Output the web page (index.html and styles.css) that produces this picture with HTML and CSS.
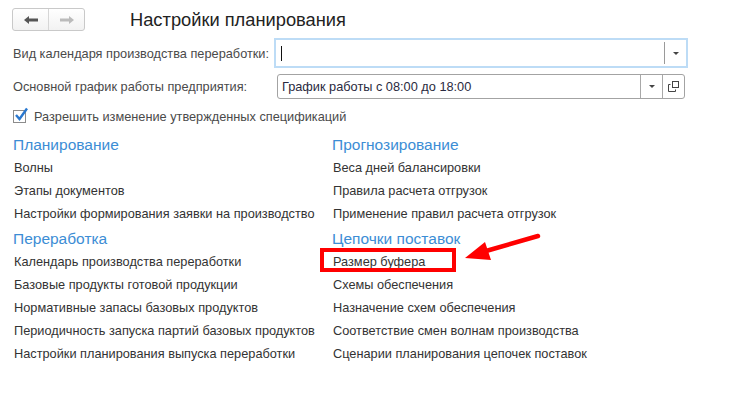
FILE: index.html
```html
<!DOCTYPE html>
<html lang="ru">
<head>
    <meta charset="UTF-8">
    <title>Настройки планирования</title>
    <link rel="stylesheet" href="styles.css">
</head>
<body>

    <div class="header">
        <div class="nav">
            <button class="nav-btn">
                <svg width="16" height="10" viewBox="0 0 16 10"><path d="M1 5 L6 1 L6 3.5 L15 3.5 L15 6.5 L6 6.5 L6 9 Z" fill="#555"/></svg>
            </button>
            <button class="nav-btn">
                <svg width="16" height="10" viewBox="0 0 16 10"><path d="M15 5 L10 1 L10 3.5 L1 3.5 L1 6.5 L10 6.5 L10 9 Z" fill="#bbb"/></svg>
            </button>
        </div>
        <h1 class="title">Настройки планирования</h1>
    </div>

    <div class="form">
        <div class="row">
            <label class="label label-wide">Вид календаря производства переработки:</label>
            <div class="field field-focus">
                <span class="caret"></span>
                <span class="field-btn field-btn-line"><span class="drop"></span></span>
            </div>
        </div>

        <div class="row">
            <label class="label label-narrow">Основной график работы предприятия:</label>
            <div class="field field-plain">
                <span class="field-text">График работы с 08:00 до 18:00</span>
                <span class="field-btn"><span class="drop"></span></span>
                <span class="field-btn">
                    <svg width="11" height="11" viewBox="0 0 11 11">
                        <rect x="4.5" y="0.5" width="6" height="6" fill="none" stroke="#444"/>
                        <path d="M2.5 3.5 H0.5 V10.5 H7.5 V8.5" fill="none" stroke="#444"/>
                    </svg>
                </span>
            </div>
        </div>

        <div class="check-row">
            <span class="checkbox">
                <svg width="16" height="16" viewBox="0 0 16 16"><path d="M3 8 L6.5 12 L14 1.5" fill="none" stroke="#2a78cf" stroke-width="2.4"/></svg>
            </span>
            <span>Разрешить изменение утвержденных спецификаций</span>
        </div>
    </div>

    <div class="groups">
        <div class="group">
            <h2 class="group-title">Планирование</h2>
            <a class="link">Волны</a>
            <a class="link">Этапы документов</a>
            <a class="link">Настройки формирования заявки на производство</a>

            <h2 class="group-title next">Переработка</h2>
            <a class="link">Календарь производства переработки</a>
            <a class="link">Базовые продукты готовой продукции</a>
            <a class="link">Нормативные запасы базовых продуктов</a>
            <a class="link">Периодичность запуска партий базовых продуктов</a>
            <a class="link">Настройки планирования выпуска переработки</a>
        </div>
        <div class="group">
            <h2 class="group-title">Прогнозирование</h2>
            <a class="link">Веса дней балансировки</a>
            <a class="link">Правила расчета отгрузок</a>
            <a class="link">Применение правил расчета отгрузок</a>

            <h2 class="group-title next">Цепочки поставок</h2>
            <a class="link marked">Размер буфера</a>
            <a class="link">Схемы обеспечения</a>
            <a class="link">Назначение схем обеспечения</a>
            <a class="link">Соответствие смен волнам производства</a>
            <a class="link">Сценарии планирования цепочек поставок</a>
        </div>
    </div>

    <!-- red annotation arrow -->
    <svg class="annot-arrow" width="742" height="402" viewBox="0 0 742 402">
        <line x1="538" y1="236" x2="486" y2="251" stroke="#f00" stroke-width="4.5" stroke-linecap="round"/>
        <polygon points="465,258 491,260 485,242" fill="#f00"/>
    </svg>

</body>
</html>
```

FILE: styles.css
```css
body {
    margin: 0;
    font-family: "Liberation Sans", Arial, sans-serif;
    font-size: 12.75px;
    color: #333;
    background: #fff;
    position: relative;
    width: 742px;
    height: 402px;
    overflow: hidden;
}

.header {
    display: flex;
    align-items: center;
    padding: 8px 0 0 12px;
    height: 23px;
}

.nav {
    display: flex;
    width: 71px;
    height: 21px;
    border: 1px solid #c9c9c9;
    border-radius: 3px;
    background: linear-gradient(#fff, #f2f2f2);
}

.nav-btn {
    flex: 1;
    border: none;
    background: none;
    padding: 0;
    display: flex;
    align-items: center;
    justify-content: center;
}

.nav-btn + .nav-btn {
    border-left: 1px solid #d6d6d6;
}

.title {
    margin: 0 0 0 45px;
    font-size: 18.3px;
    font-weight: normal;
    color: #222;
}

.form {
    padding-left: 13px;
}

.row {
    display: flex;
    align-items: center;
}

.row:first-child {
    margin-top: 7px;
    height: 30px;
}

.row + .row {
    margin-top: 6px;
    height: 25px;
}

.label {
    color: #4a4a4a;
    white-space: nowrap;
}

.label-wide {
    width: 261px;
}

.label-narrow {
    width: 264px;
}

.field {
    display: flex;
    align-items: stretch;
    box-sizing: border-box;
}

.field-focus {
    width: 414px;
    height: 30px;
    border: 2px solid #bddcf6;
    padding: 2px 0 2px 5px;
}

.caret {
    width: 1px;
    height: 15px;
    background: #111;
    align-self: center;
    margin-top: 1px;
}

.field-focus .field-btn {
    margin-left: auto;
}

.field-btn {
    width: 21px;
    display: flex;
    align-items: center;
    justify-content: center;
    border-left: 1px solid #a8a8a8;
}

.field-btn-line {
    border-left-color: #9a9a9a;
}

.drop {
    width: 0;
    height: 0;
    border-left: 3px solid transparent;
    border-right: 3px solid transparent;
    border-top: 3px solid #444;
}

.field-plain {
    width: 408px;
    height: 25px;
    border: 1px solid #a3a3a3;
    border-radius: 3px;
}

.field-text {
    flex: 1;
    align-self: center;
    padding-left: 4px;
    color: #2a2a40;
}

.check-row {
    display: flex;
    align-items: center;
    margin-top: 5px;
    height: 24px;
    color: #4a4a4a;
}

.checkbox {
    position: relative;
    width: 11px;
    height: 11px;
    border: 1px solid #8c8c8c;
    margin-right: 8px;
    background: #fff;
}

.checkbox svg {
    position: absolute;
    left: -1px;
    top: -4px;
}

.groups {
    display: grid;
    grid-template-columns: 319px 319px;
    padding-left: 13px;
    margin-top: 6px;
}

.group {
    display: flex;
    flex-direction: column;
}

.group-title {
    margin: 0;
    font-size: 15.5px;
    font-weight: normal;
    line-height: 22px;
    color: #3c8dd5;
}

.group-title.next {
    margin-top: 3px;
}

.link {
    line-height: 23px;
    padding-left: 1px;
    color: #333;
    align-self: flex-start;
}

.marked {
    position: relative;
}

.marked::after {
    content: "";
    position: absolute;
    left: -12px;
    top: -2px;
    width: 128px;
    height: 16px;
    border: 4px solid #f00;
}

.annot-arrow {
    position: absolute;
    left: 0;
    top: 0;
    pointer-events: none;
}
```
